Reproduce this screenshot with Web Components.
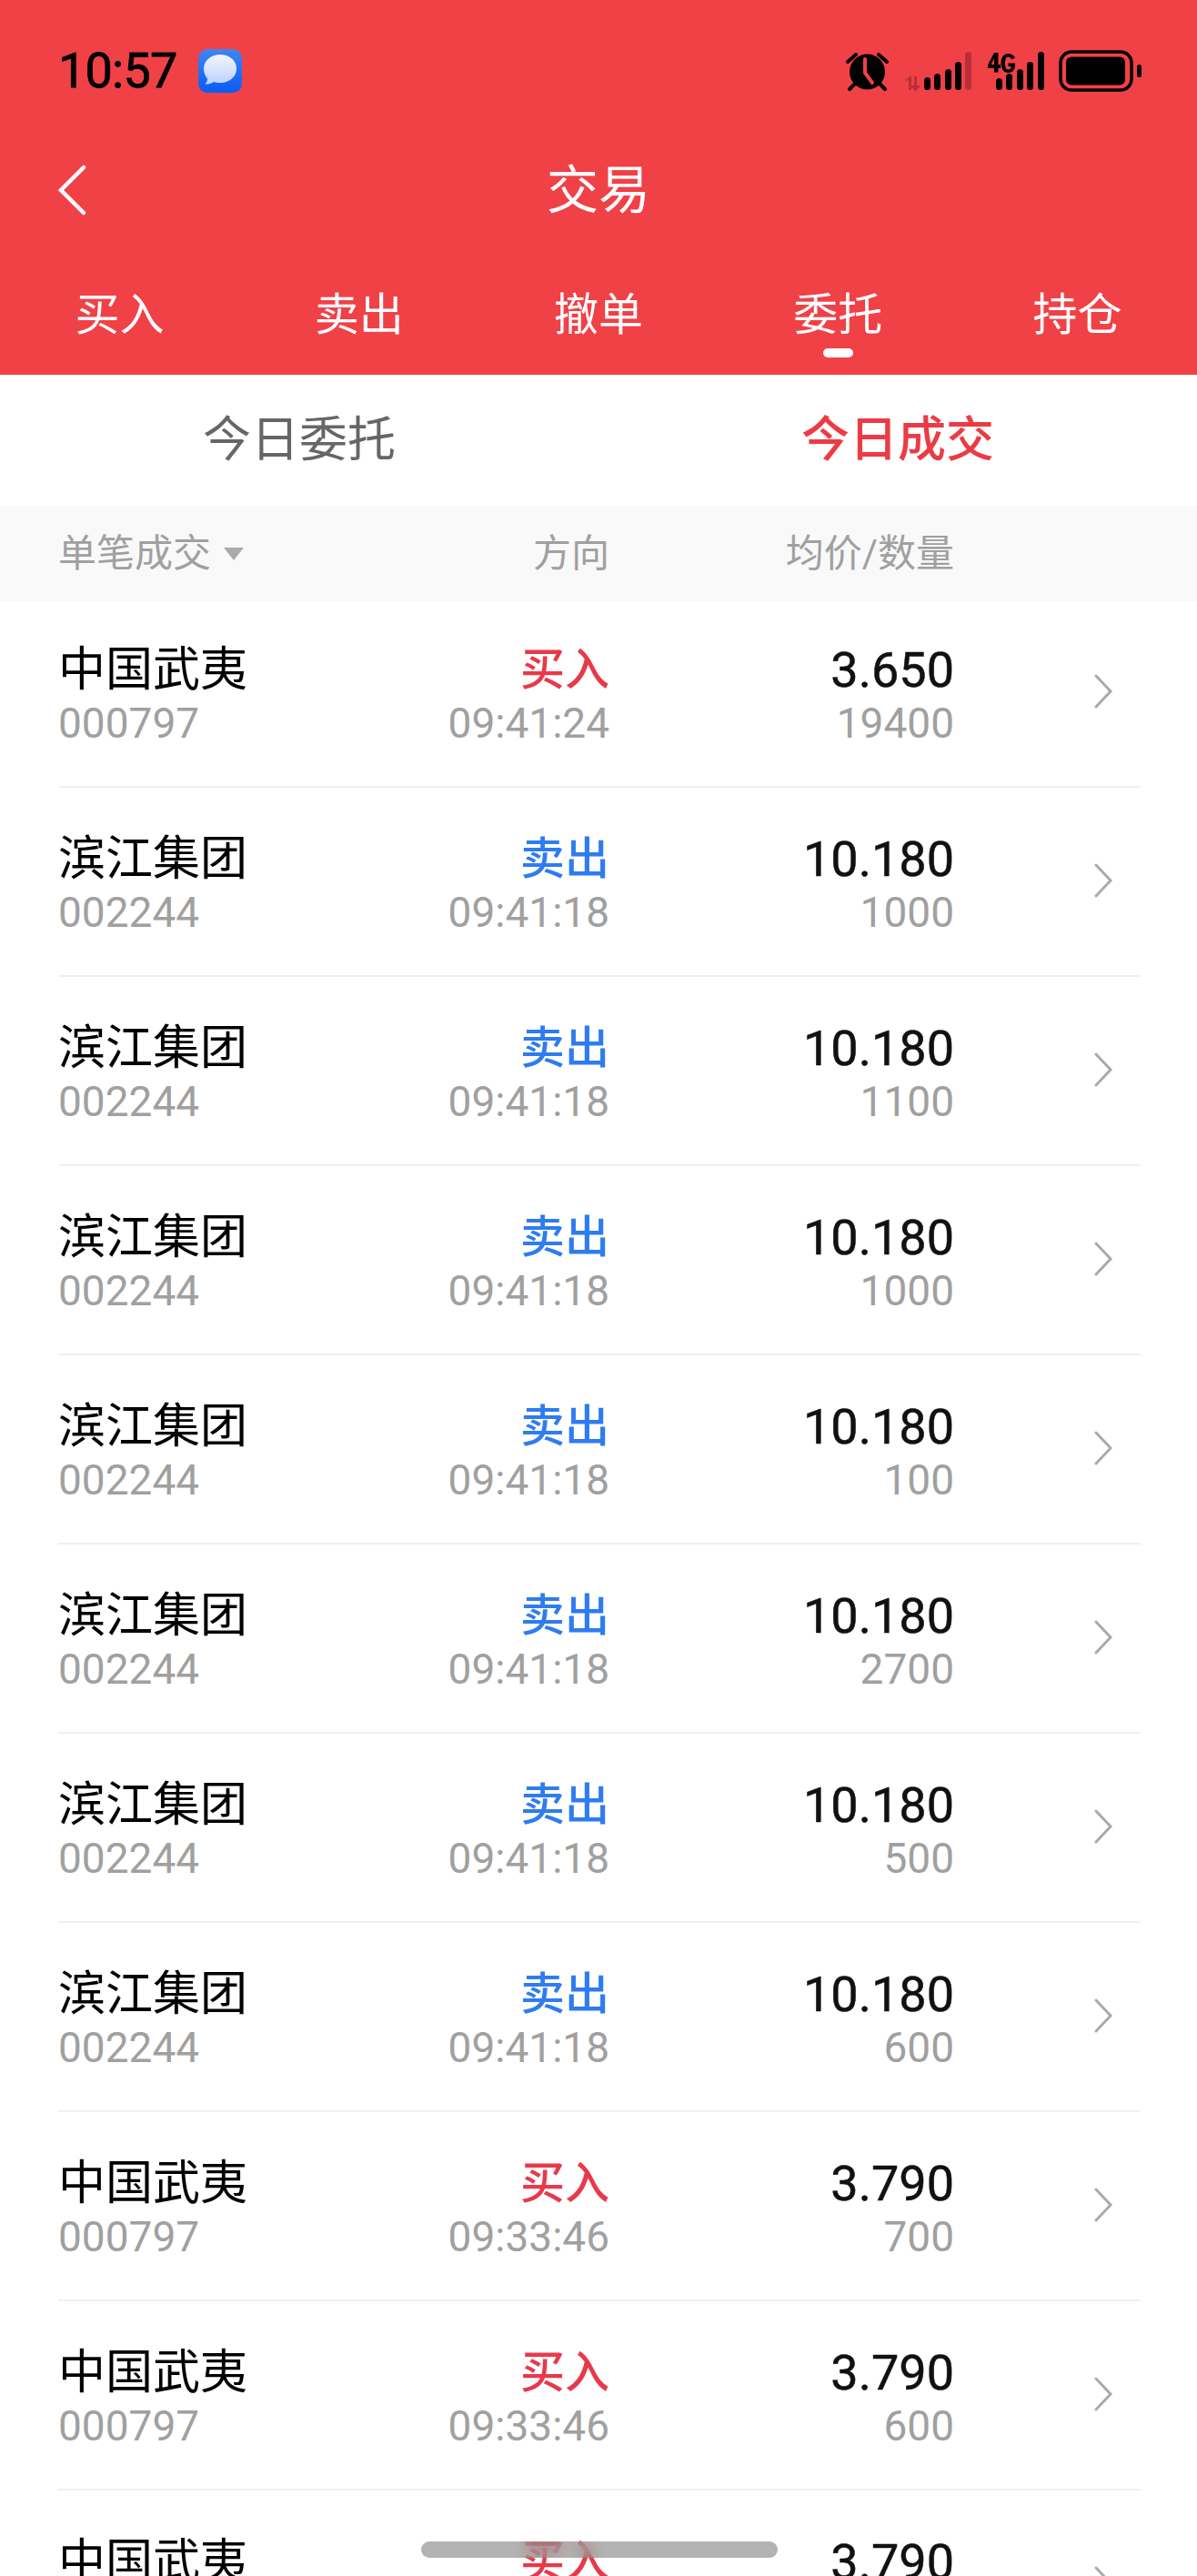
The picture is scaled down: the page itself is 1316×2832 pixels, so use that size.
<!DOCTYPE html>
<html lang="zh-CN">
<head>
<meta charset="utf-8">
<title>交易</title>
<style>
  html, body { margin: 0; height: 2832px; overflow: hidden; background: #fff; }
  body { position: relative; font-family: Roboto, "Noto Sans CJK SC", sans-serif; }
</style>
</head>
<body>
<trade-header>
  <status-bar time="10:57"></status-bar>
  <nav-bar title="交易"></nav-bar>
  <trade-tabs>
    <trade-tab>买入</trade-tab>
    <trade-tab>卖出</trade-tab>
    <trade-tab>撤单</trade-tab>
    <trade-tab active>委托</trade-tab>
    <trade-tab>持仓</trade-tab>
  </trade-tabs>
</trade-header>
<sub-tabs></sub-tabs>
<deal-head></deal-head>
<deal-row first name="中国武夷" code="000797" side="买入" time="09:41:24" price="3.650" qty="19400"></deal-row>
<deal-row name="滨江集团" code="002244" side="卖出" time="09:41:18" price="10.180" qty="1000"></deal-row>
<deal-row name="滨江集团" code="002244" side="卖出" time="09:41:18" price="10.180" qty="1100"></deal-row>
<deal-row name="滨江集团" code="002244" side="卖出" time="09:41:18" price="10.180" qty="1000"></deal-row>
<deal-row name="滨江集团" code="002244" side="卖出" time="09:41:18" price="10.180" qty="100"></deal-row>
<deal-row name="滨江集团" code="002244" side="卖出" time="09:41:18" price="10.180" qty="2700"></deal-row>
<deal-row name="滨江集团" code="002244" side="卖出" time="09:41:18" price="10.180" qty="500"></deal-row>
<deal-row name="滨江集团" code="002244" side="卖出" time="09:41:18" price="10.180" qty="600"></deal-row>
<deal-row name="中国武夷" code="000797" side="买入" time="09:33:46" price="3.790" qty="700"></deal-row>
<deal-row name="中国武夷" code="000797" side="买入" time="09:33:46" price="3.790" qty="600"></deal-row>
<deal-row name="中国武夷" code="000797" side="买入" time="09:33:46" price="3.790" qty="300"></deal-row>
<home-bar></home-bar>

<script>
const FONT = 'Roboto, "Noto Sans CJK SC", sans-serif';

class BaseComponent extends HTMLElement {
  constructor() {
    super();
    this.attachShadow({ mode: 'open' });
  }

  connectedCallback() {
    this.render();
  }

  attr(name) {
    return this.getAttribute(name) || '';
  }

  render(template) {
    this.shadowRoot.innerHTML = template;
  }
}

class TradeHeader extends BaseComponent {
  render() {
    super.render(`
      <style>
        :host { display: block; height: 412px; background: #f04147; color: #fff; }
      </style>
      <slot></slot>
    `);
  }
}

class StatusBar extends BaseComponent {
  render() {
    super.render(`
      <style>
        :host {
          display: flex;
          align-items: center;
          height: 156px;
          padding: 0 58px 0 64px;
          font: 400 54px/1 ${FONT};
          color: #000;
        }
        .time { letter-spacing: -0.8px; -webkit-text-stroke: 0.8px #000; }
        .msg { margin-left: 24px; width: 48px; height: 48px; }
        .icons { margin-left: auto; width: 328px; height: 48px; }
      </style>
      <span class="time">${this.attr('time')}</span>
      <svg class="msg" viewBox="0 0 48 48">
        <defs>
          <linearGradient id="tile" x1="0" y1="0" x2="0" y2="1">
            <stop offset="0" stop-color="#3f86f5"/><stop offset="1" stop-color="#0a5cf2"/>
          </linearGradient>
          <linearGradient id="bubble" x1="0" y1="0" x2="0" y2="1">
            <stop offset="0" stop-color="#f2f5fd"/><stop offset="1" stop-color="#bcd2fa"/>
          </linearGradient>
        </defs>
        <rect width="48" height="48" rx="10" fill="url(#tile)"/>
        <path d="M24 6c10 0 18 6.500 18 15.500S34 37 24 37c-2.500 0-5-.4-7-1.100-2.500 1.800-6 2.600-9.500 2.600 1.500-1.600 2.500-3.500 2.700-5.700C7.800 30 6 26 6 21.500 6 12.500 14 6 24 6z" fill="url(#bubble)"/>
      </svg>
      <svg class="icons" viewBox="930 55 328 48">
        <g fill="#000">
          <circle cx="953.500" cy="80" r="19.500"/>
          <path d="M951 66v15l8 11" fill="none" stroke="#f04147" stroke-width="4" stroke-linecap="round" stroke-linejoin="round"/>
          <path d="M932 69l9-8M966 61l9 8M939 94l-5 5M968 94l5 5" fill="none" stroke="#000" stroke-width="4" stroke-linecap="round"/>
        </g>
        <g fill="#ba2f35">
          <path d="M999 88l-3 3v-2l4-4h2v15h-3zM1005 85h3v10h4l-5.500 7-5.500-7h4z"/>
          <rect x="1061" y="58" width="7" height="42" rx="3.500"/>
        </g>
        <g fill="#000">
          <rect x="1016" y="86" width="7" height="14" rx="3.500"/>
          <rect x="1027" y="82" width="7" height="18" rx="3.500"/>
          <rect x="1039" y="77" width="7" height="23" rx="3.500"/>
          <rect x="1050" y="69" width="7" height="31" rx="3.500"/>
          <rect x="1095" y="87" width="7" height="13" rx="3.500"/>
          <rect x="1106" y="82" width="7" height="18" rx="3.500"/>
          <rect x="1118" y="77" width="7" height="23" rx="3.500"/>
          <rect x="1129" y="69" width="7" height="31" rx="3.500"/>
          <rect x="1141" y="58" width="7" height="42" rx="3.500"/>
          <path d="M1093 59h4.500v13h2.500v4h-2.500v4.500H1093V76h-7v-3.500zM1093 72v-6.500l-3.500 6.500z"/>
          <path d="M1116 64.500l-3.500 2c-1-1.600-2.200-3-4-3-2.700 0-3.500 2.800-3.500 7s.8 7 3.500 7c2 0 3-1.500 3.300-3.500h-3.300v-3.500h7.500v2c0 5.500-3 8.500-7.500 8.500-5.200 0-8-4.200-8-10.500s2.800-10.500 8-10.500c3.500 0 6 2 7.500 4.500z"/>
          <rect x="1166" y="58" width="78" height="42" rx="12" fill="none" stroke="#000" stroke-width="3.500"/>
          <rect x="1172" y="63.500" width="65" height="31" rx="6"/>
          <rect x="1250" y="72" width="5" height="14" rx="2.500"/>
        </g>
      </svg>
    `);
  }
}

class NavBar extends BaseComponent {
  render() {
    super.render(`
      <style>
        :host {
          display: flex;
          align-items: center;
          justify-content: center;
          position: relative;
          height: 102px;
          padding-top: 2px;
          font: 400 57px/1 ${FONT};
          color: #fff;
        }
        svg { position: absolute; left: 62px; top: 25px; width: 34px; height: 56px; }
      </style>
      <svg viewBox="0 0 34 56">
        <path d="M30 3L5 28l25 25" fill="none" stroke="#fff" stroke-width="4.500" stroke-linecap="round" stroke-linejoin="miter"/>
      </svg>
      <span>${this.attr('title')}</span>
    `);
  }
}

class TradeTabs extends BaseComponent {
  render() {
    super.render(`
      <style>
        :host { display: flex; height: 152px; }
      </style>
      <slot></slot>
    `);
  }
}

class TradeTab extends BaseComponent {
  render() {
    super.render(`
      <style>
        :host {
          flex: 1;
          display: flex;
          flex-direction: column;
          align-items: center;
          padding-top: 62px;
          font: 400 49px/1 ${FONT};
          color: #fff;
        }
        i { width: 33px; height: 10px; margin-top: 12px; border-radius: 5px; background: #fff; }
      </style>
      <slot></slot>
      ${this.hasAttribute('active') ? '<i></i>' : ''}
    `);
  }
}

class SubTabs extends BaseComponent {
  render() {
    super.render(`
      <style>
        :host {
          display: grid;
          grid-template-columns: 658px 658px;
          height: 144px;
          align-items: center;
          text-align: center;
          font: 400 53px/1 ${FONT};
          color: #666;
        }
        .on { color: #ec3b45; font-weight: 500; }
      </style>
      <span>今日委托</span>
      <span class="on">今日成交</span>
    `);
  }
}

class DealHead extends BaseComponent {
  render() {
    super.render(`
      <style>
        :host {
          display: grid;
          grid-template-columns: 306px 300px 379px;
          align-items: center;
          height: 105px;
          padding-left: 64px;
          background: #f9f9f9;
          font: 400 42px/1 ${FONT};
          color: #a0a0a0;
        }
        .r { text-align: right; }
        .sort { display: flex; align-items: center; gap: 14px; }
        svg { width: 22px; height: 14px; }
      </style>
      <span class="sort">单笔成交<svg viewBox="0 0 22 14"><path d="M0 0h22L11 14z" fill="#aaa"/></svg></span>
      <span class="r">方向</span>
      <span class="r">均价/数量</span>
    `);
  }
}

class DealRow extends BaseComponent {
  render() {
    const sell = this.attr('side') === '卖出';
    const top = this.hasAttribute('first') ? 48 : 51;
    super.render(`
      <style>
        :host { display: block; padding: 0 62px 0 64px; }
        .row {
          display: grid;
          grid-template-columns: 306px 300px 379px 1fr;
          grid-template-rows: 55px 62px;
          padding: ${top}px 0 38px;
          border-bottom: 2px solid #f0f0f0;
          align-items: center;
        }
        .r { text-align: right; }
        .name { font: 400 52px/55px ${FONT}; color: #000; }
        .side { font: 500 49px/55px ${FONT}; color: ${sell ? '#2e7cf0' : '#e8394a'}; }
        .price { font: 400 54px/55px ${FONT}; color: #111; -webkit-text-stroke: 0.5px #111; }
        .sub { font: 400 46px/62px ${FONT}; color: #a0a0a0; }
        svg { grid-column: 4; grid-row: 1 / span 2; justify-self: start; margin: 0 0 16px 153px; width: 22px; height: 38px; }
      </style>
      <div class="row">
        <span class="name">${this.attr('name')}</span>
        <span class="side r">${this.attr('side')}</span>
        <span class="price r">${this.attr('price')}</span>
        <span class="sub">${this.attr('code')}</span>
        <span class="sub r">${this.attr('time')}</span>
        <span class="sub r">${this.attr('qty')}</span>
        <svg viewBox="0 0 22 38"><path d="M3 2l16 17L3 36" fill="none" stroke="#aaa" stroke-width="3" stroke-linecap="round"/></svg>
      </div>
    `);
  }
}

// sits over the list, the text behind it shows through blurred
class HomeBar extends BaseComponent {
  render() {
    super.render(`
      <style>
        :host {
          position: absolute;
          left: 463px;
          top: 2794px;
          width: 392px;
          height: 18px;
          border-radius: 9px;
          background: rgba(117, 117, 117, 0.55);
          -webkit-backdrop-filter: blur(8px);
          backdrop-filter: blur(8px);
        }
      </style>
    `);
  }
}

window.customElements.define('trade-header', TradeHeader);
window.customElements.define('status-bar', StatusBar);
window.customElements.define('nav-bar', NavBar);
window.customElements.define('trade-tabs', TradeTabs);
window.customElements.define('trade-tab', TradeTab);
window.customElements.define('sub-tabs', SubTabs);
window.customElements.define('deal-head', DealHead);
window.customElements.define('deal-row', DealRow);
window.customElements.define('home-bar', HomeBar);
</script>
</body>
</html>
